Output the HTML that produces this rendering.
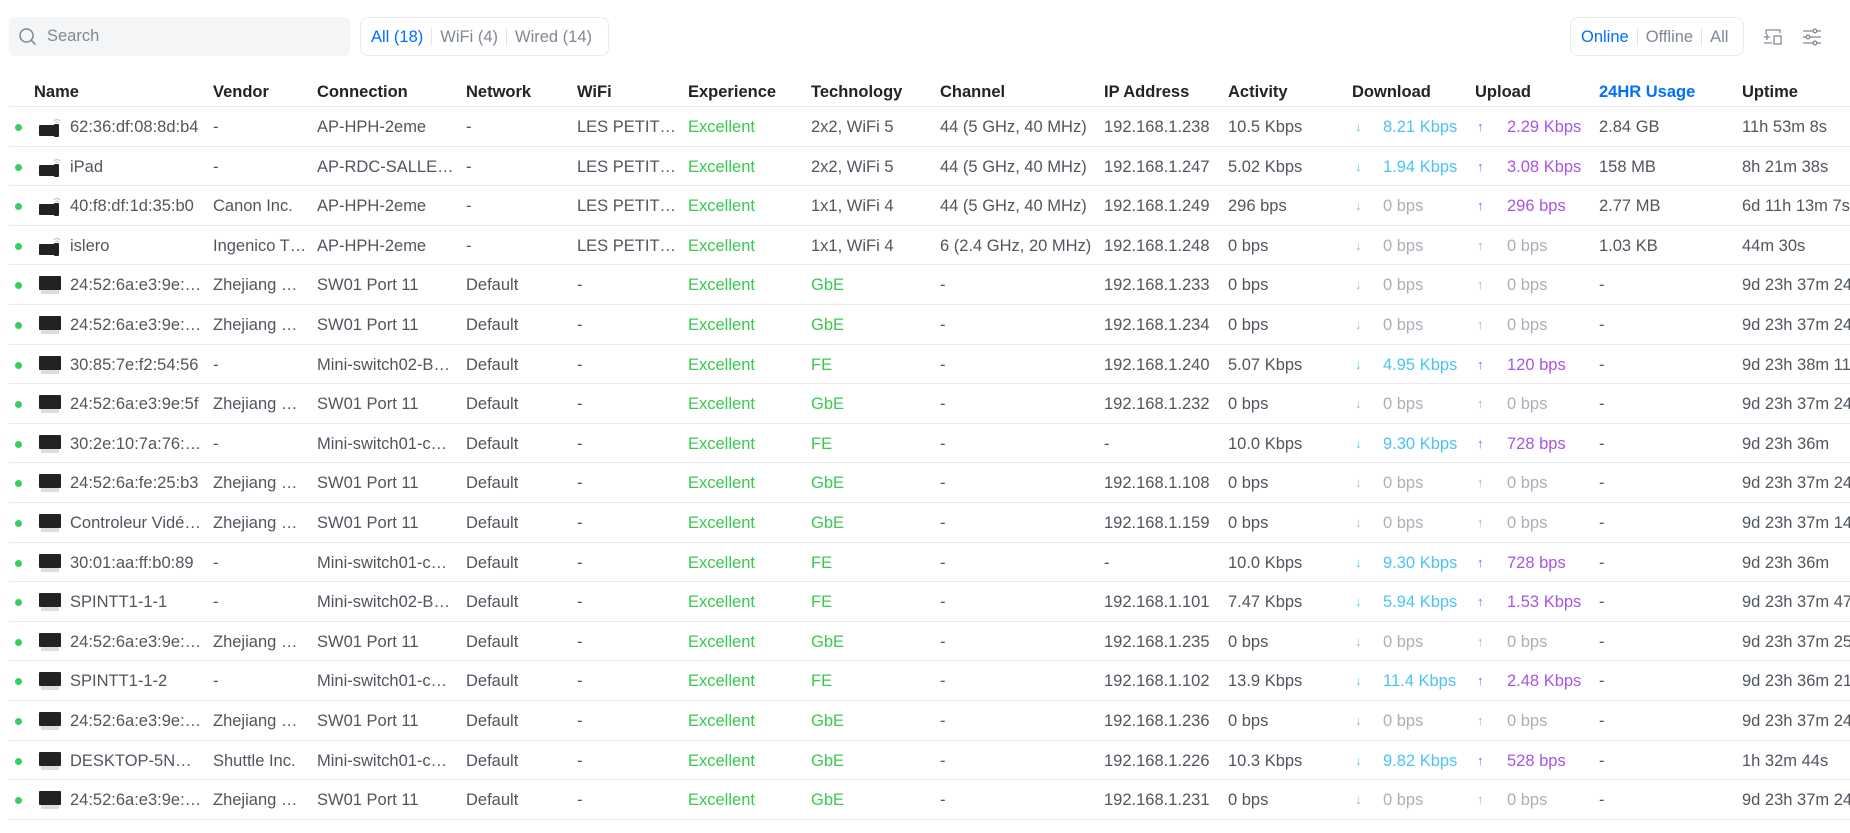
<!DOCTYPE html>
<html><head><meta charset="utf-8"><style>
*{margin:0;padding:0;box-sizing:border-box}
body{width:1850px;height:833px;overflow:hidden;background:#fff;font-family:"Liberation Sans",sans-serif;font-size:16.5px;color:#50565e;position:relative}
.search{position:absolute;left:9px;top:17px;width:341px;height:39px;background:#f4f5f6;border-radius:6px}
.search span{position:absolute;left:38px;top:10px;color:#808893}
.pill{position:absolute;top:17px;height:39px;border:1px solid #e9ebee;border-radius:8px;display:flex;align-items:center;padding:0 2px;white-space:nowrap}
.pill span{color:#808893;padding:0 8px;border-left:1px solid #e3e5e8;line-height:18px;white-space:nowrap}
.pill span:first-child{border-left:none;color:#006fff}
.row{position:absolute;left:9px;width:1841px;height:39.6px;border-bottom:1px solid #eaecef}
.row>span{position:absolute;top:11px;white-space:nowrap}
.hdr>span{color:#212327;font-weight:bold}
.dot{width:7px;height:7px;border-radius:50%;background:#38cc65;left:6px;top:17px!important}
.g{color:#38c94f}.dl{color:#4cc3f5}.ul{color:#a855e6}.mu{color:#aab0b8}
.ico{position:absolute;left:28px;top:10px;width:26px;height:20px}
</style></head><body>
<div class="search"><svg style="position:absolute;left:9px;top:10px" width="20" height="20" viewBox="0 0 20 20"><circle cx="8.5" cy="8.5" r="6.5" fill="none" stroke="#808893" stroke-width="1.5"/><path d="M13.2 13.2L17.5 17.5" stroke="#808893" stroke-width="1.5"/></svg><span>Search</span></div>
<div class="pill" style="left:360px;width:249px"><span>All (18)</span><span>WiFi (4)</span><span>Wired (14)</span></div>
<div class="pill" style="left:1570px;width:174px"><span>Online</span><span>Offline</span><span>All</span></div>
<svg style="position:absolute;left:1762px;top:26px" width="22" height="22" viewBox="0 0 22 22" fill="none" stroke="#808893" stroke-width="1.3"><path d="M4 4h14v3M4 4v4M2 11h6M5 8v6M2 17h8M12 10h7v8h-7z"/></svg>
<svg style="position:absolute;left:1801px;top:26px" width="22" height="22" viewBox="0 0 22 22" fill="none" stroke="#808893" stroke-width="1.3"><path d="M2 5h18M2 11h18M2 17h18"/><circle cx="14" cy="5" r="1.8" fill="#fff"/><circle cx="7" cy="11" r="1.8" fill="#fff"/><circle cx="14" cy="17" r="1.8" fill="#fff"/></svg>
<div id="t"></div>
<script>
const W='<svg class="ico" viewBox="0 0 26 20"><rect x="2" y="8" width="17" height="11" rx="1" fill="#222"/><rect x="17" y="7" width="5" height="13" rx="1" fill="#222"/><path d="M17 4a4 4 0 0 1 6 0M18.5 5.8a2 2 0 0 1 3 0" stroke="#bbb" fill="none" stroke-width="1"/></svg>';
const M='<svg class="ico" viewBox="0 0 26 20"><rect x="2" y="1" width="22" height="14" rx="1" fill="#222"/><rect x="4" y="15" width="18" height="4" fill="#ddd"/></svg>';
const rows=[
[1,'62:36:df:08:8d:b4','-','AP-HPH-2eme','-','LES PETIT…','2x2, WiFi 5','44 (5 GHz, 40 MHz)','192.168.1.238','10.5 Kbps','8.21 Kbps','2.29 Kbps','2.84 GB','11h 53m 8s'],
[1,'iPad','-','AP-RDC-SALLE…','-','LES PETIT…','2x2, WiFi 5','44 (5 GHz, 40 MHz)','192.168.1.247','5.02 Kbps','1.94 Kbps','3.08 Kbps','158 MB','8h 21m 38s'],
[1,'40:f8:df:1d:35:b0','Canon Inc.','AP-HPH-2eme','-','LES PETIT…','1x1, WiFi 4','44 (5 GHz, 40 MHz)','192.168.1.249','296 bps','0 bps','296 bps','2.77 MB','6d 11h 13m 7s'],
[1,'islero','Ingenico T…','AP-HPH-2eme','-','LES PETIT…','1x1, WiFi 4','6 (2.4 GHz, 20 MHz)','192.168.1.248','0 bps','0 bps','0 bps','1.03 KB','44m 30s'],
[0,'24:52:6a:e3:9e:…','Zhejiang …','SW01 Port 11','Default','-','GbE','-','192.168.1.233','0 bps','0 bps','0 bps','-','9d 23h 37m 24s'],
[0,'24:52:6a:e3:9e:…','Zhejiang …','SW01 Port 11','Default','-','GbE','-','192.168.1.234','0 bps','0 bps','0 bps','-','9d 23h 37m 24s'],
[0,'30:85:7e:f2:54:56','-','Mini-switch02-B…','Default','-','FE','-','192.168.1.240','5.07 Kbps','4.95 Kbps','120 bps','-','9d 23h 38m 11s'],
[0,'24:52:6a:e3:9e:5f','Zhejiang …','SW01 Port 11','Default','-','GbE','-','192.168.1.232','0 bps','0 bps','0 bps','-','9d 23h 37m 24s'],
[0,'30:2e:10:7a:76:…','-','Mini-switch01-c…','Default','-','FE','-','-','10.0 Kbps','9.30 Kbps','728 bps','-','9d 23h 36m'],
[0,'24:52:6a:fe:25:b3','Zhejiang …','SW01 Port 11','Default','-','GbE','-','192.168.1.108','0 bps','0 bps','0 bps','-','9d 23h 37m 24s'],
[0,'Controleur Vidé…','Zhejiang …','SW01 Port 11','Default','-','GbE','-','192.168.1.159','0 bps','0 bps','0 bps','-','9d 23h 37m 14s'],
[0,'30:01:aa:ff:b0:89','-','Mini-switch01-c…','Default','-','FE','-','-','10.0 Kbps','9.30 Kbps','728 bps','-','9d 23h 36m'],
[0,'SPINTT1-1-1','-','Mini-switch02-B…','Default','-','FE','-','192.168.1.101','7.47 Kbps','5.94 Kbps','1.53 Kbps','-','9d 23h 37m 47s'],
[0,'24:52:6a:e3:9e:…','Zhejiang …','SW01 Port 11','Default','-','GbE','-','192.168.1.235','0 bps','0 bps','0 bps','-','9d 23h 37m 25s'],
[0,'SPINTT1-1-2','-','Mini-switch01-c…','Default','-','FE','-','192.168.1.102','13.9 Kbps','11.4 Kbps','2.48 Kbps','-','9d 23h 36m 21s'],
[0,'24:52:6a:e3:9e:…','Zhejiang …','SW01 Port 11','Default','-','GbE','-','192.168.1.236','0 bps','0 bps','0 bps','-','9d 23h 37m 24s'],
[0,'DESKTOP-5N…','Shuttle Inc.','Mini-switch01-c…','Default','-','GbE','-','192.168.1.226','10.3 Kbps','9.82 Kbps','528 bps','-','1h 32m 44s'],
[0,'24:52:6a:e3:9e:…','Zhejiang …','SW01 Port 11','Default','-','GbE','-','192.168.1.231','0 bps','0 bps','0 bps','-','9d 23h 37m 24s']];
const X=[61,204,308,457,568,679,802,931,1095,1219,1343,1466,1590,1733];
let h='<div class="row hdr" style="top:68px;height:39px">';
['Name','Vendor','Connection','Network','WiFi','Experience','Technology','Channel','IP Address','Activity','Download','Upload','24HR Usage','Uptime'].forEach((n,i)=>{h+=`<span style="left:${i==0?25:X[i]}px;top:15px${i==12?';color:#006fff':''}">${n}</span>`});
h+='</div>';
const s=(x,v,c)=>`<span class="${c||''}" style="left:${x}px">${v}</span>`;
rows.forEach((r,k)=>{
 const top=107+k*39.6;
 h+=`<div class="row" style="top:${top}px"><span class="dot"></span>${r[0]?W:M}`;
 h+=s(X[0],r[1])+s(X[1],r[2])+s(X[2],r[3])+s(X[3],r[4])+s(X[4],r[5]);
 h+=s(X[5],'Excellent','g');
 h+=s(X[6],r[6],r[0]?'':'g');
 h+=s(X[7],r[7])+s(X[8],r[8])+s(X[9],r[9]);
 const da=r[10]!='0 bps', ua=r[11]!='0 bps';
 h+=`<span class="${da?'dl':'mu'}" style="left:1346px;font-size:13px;top:12px">↓</span>`+s(1374,r[10],da?'dl':'mu');
 h+=`<span class="${ua?'ul':'mu'}" style="left:1468px;font-size:13px;top:12px">↑</span>`+s(1498,r[11],ua?'ul':'mu');
 h+=s(X[12],r[12])+s(X[13],r[13]);
 h+='</div>';
});
document.getElementById('t').innerHTML=h;
</script>
</body></html>
